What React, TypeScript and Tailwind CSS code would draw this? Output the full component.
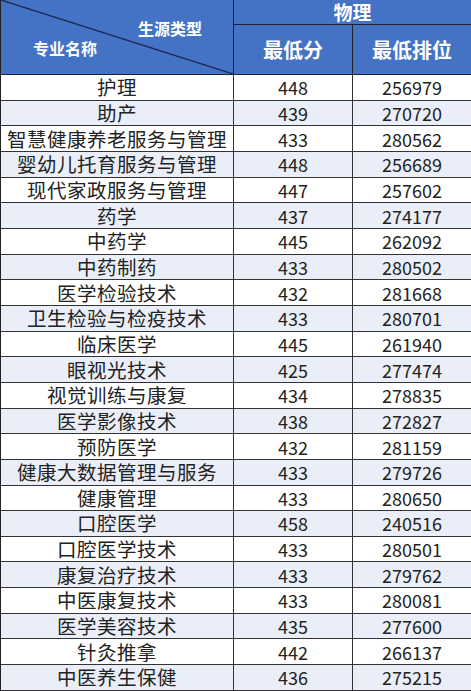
const rows: [string, string, string][] = [
  ["护理", "448", "256979"],
  ["助产", "439", "270720"],
  ["智慧健康养老服务与管理", "433", "280562"],
  ["婴幼儿托育服务与管理", "448", "256689"],
  ["现代家政服务与管理", "447", "257602"],
  ["药学", "437", "274177"],
  ["中药学", "445", "262092"],
  ["中药制药", "433", "280502"],
  ["医学检验技术", "432", "281668"],
  ["卫生检验与检疫技术", "433", "280701"],
  ["临床医学", "445", "261940"],
  ["眼视光技术", "425", "277474"],
  ["视觉训练与康复", "434", "278835"],
  ["医学影像技术", "438", "272827"],
  ["预防医学", "432", "281159"],
  ["健康大数据管理与服务", "433", "279726"],
  ["健康管理", "433", "280650"],
  ["口腔医学", "458", "240516"],
  ["口腔医学技术", "433", "280501"],
  ["康复治疗技术", "433", "279762"],
  ["中医康复技术", "433", "280081"],
  ["医学美容技术", "435", "277600"],
  ["针灸推拿", "442", "266137"],
  ["中医养生保健", "436", "275215"],
];

const cjk = "font-['Noto_Sans_CJK_SC',sans-serif]";

export default function App() {
  return (
    <div className={`w-[471px] h-[691px] overflow-hidden bg-white ${cjk}`}>
      {/* header */}
      <div className="grid grid-cols-[233px_119px_119px] grid-rows-[25px_50px] bg-[#4472c4] text-white font-bold border-l border-[#222]">
        <div className="row-span-2 relative border-r border-b border-[#222] flex flex-col pt-[19px] text-[16px] leading-[18px]">
          <svg className="absolute inset-0" width="232" height="74" viewBox="0 0 232 74">
            <line x1="0" y1="0" x2="232" y2="74" stroke="#1b2a50" strokeWidth="1.3" />
          </svg>
          <span className="ml-[137px] relative">生源类型</span>
          <span className="ml-[32px] mt-[2px] relative">专业名称</span>
        </div>
        <div className="col-span-2 border-r border-b border-[#222] flex items-center justify-center text-[19px] leading-[22px]">
          物理
        </div>
        <div className="border-r border-b border-[#222] flex items-center justify-center text-[20px] leading-[24px]">
          最低分
        </div>
        <div className="border-r border-b border-[#222] flex items-center justify-center text-[20px] leading-[24px]">
          最低排位
        </div>
      </div>
      {/* body */}
      <div className="border-l border-[#222] text-[#222]">
        {rows.map(([name, score, rank], i) => (
          <div
            key={name}
            className={`grid grid-cols-[233px_119px_119px] h-[25.67px] ${i % 2 === 1 ? "bg-[#e9eef8]" : "bg-white"}`}
          >
            <div className="border-r border-b border-[#333] flex items-center justify-center text-[19.5px] leading-[22px] tracking-[0.5px]">
              {name}
            </div>
            <div className="border-r border-b border-[#333] flex items-center justify-center text-[18px] leading-[22px]">
              {score}
            </div>
            <div className="border-r border-b border-[#333] flex items-center justify-center text-[18px] leading-[22px]">
              {rank}
            </div>
          </div>
        ))}
      </div>
    </div>
  );
}
